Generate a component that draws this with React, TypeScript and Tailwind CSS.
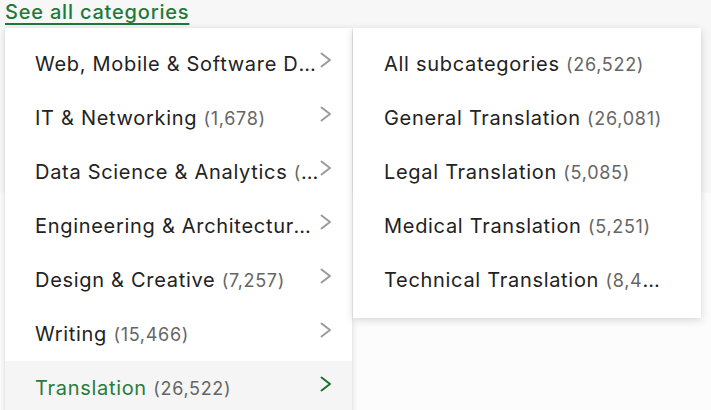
const CATEGORIES = [
    { name: "Web, Mobile & Software Dev", count: "(4,512)" },
    { name: "IT & Networking", count: "(1,678)" },
    { name: "Data Science & Analytics", count: "(2,105)" },
    { name: "Engineering & Architecture", count: "(3,902)" },
    { name: "Design & Creative", count: "(7,257)" },
    { name: "Writing", count: "(15,466)" },
    { name: "Translation", count: "(26,522)", active: true },
];

const SUBCATEGORIES = [
    { name: "All subcategories", count: "(26,522)" },
    { name: "General Translation", count: "(26,081)" },
    { name: "Legal Translation", count: "(5,085)" },
    { name: "Medical Translation", count: "(5,251)" },
    { name: "Technical Translation", count: "(8,443)" },
];

function Chevron({ className }: { className: string }) {
    return (
        <svg width="12" height="16" viewBox="0 0 12 16" fill="none" className={className}>
            <polyline points="1.5,1.5 10,8 1.5,14.5" stroke="currentColor" strokeWidth="2" strokeLinecap="round" strokeLinejoin="round" />
        </svg>
    );
}

export default function App() {
    return (
        <div
            className="h-[410px] w-[711px] overflow-hidden bg-[linear-gradient(to_bottom,#f7f7f7_0px,#f7f7f7_192px,#fcfcfc_193px)] text-[#222]"
            style={{ fontFamily: "Inter, 'Noto Sans', sans-serif" }}
        >
            {/* Trigger link */}
            <div className="h-[28px] pl-[5px]">
                <a href="#" className="text-[20px] font-medium leading-[24px] tracking-[0.04em] text-[#1e7a3b] underline underline-offset-[4px] decoration-2">
                    See all categories
                </a>
            </div>

            <div className="flex items-start pl-[5px] gap-px">
                {/* Categories */}
                <ul className="w-[347px] bg-white pt-[9px] pb-3 shadow-[0_1px_6px_rgba(0,0,0,0.16)]">
                    {CATEGORIES.map((c) => (
                        <li
                            key={c.name}
                            className={`flex h-[54px] items-center pl-[30px] ${c.active ? "bg-[#f5f5f5]" : ""}`}
                        >
                            <span className="w-[285px] truncate text-[20px] tracking-[0.035em]">
                                <span className={c.active ? "text-[#2a7b3c]" : "text-[#222]"}>{c.name}</span>{" "}
                                <span className="text-[#666] text-[18px]">{c.count}</span>
                            </span>
                            <Chevron className={`-mt-[8px] ${c.active ? "text-[#1a6e2e]" : "text-[#9b9b9b]"}`} />
                        </li>
                    ))}
                </ul>

                {/* Subcategories */}
                <ul className="w-[348px] bg-white pt-[9px] pb-[11px] shadow-[0_2px_8px_rgba(0,0,0,0.16)]">
                    {SUBCATEGORIES.map((s) => (
                        <li key={s.name} className="flex h-[54px] items-center pl-[31px]">
                            <span className="w-[287px] truncate text-[20px] tracking-[0.035em]">
                                <span className="text-[#222]">{s.name}</span>{" "}
                                <span className="text-[#666] text-[18px]">{s.count}</span>
                            </span>
                        </li>
                    ))}
                </ul>
            </div>
        </div>
    );
}
